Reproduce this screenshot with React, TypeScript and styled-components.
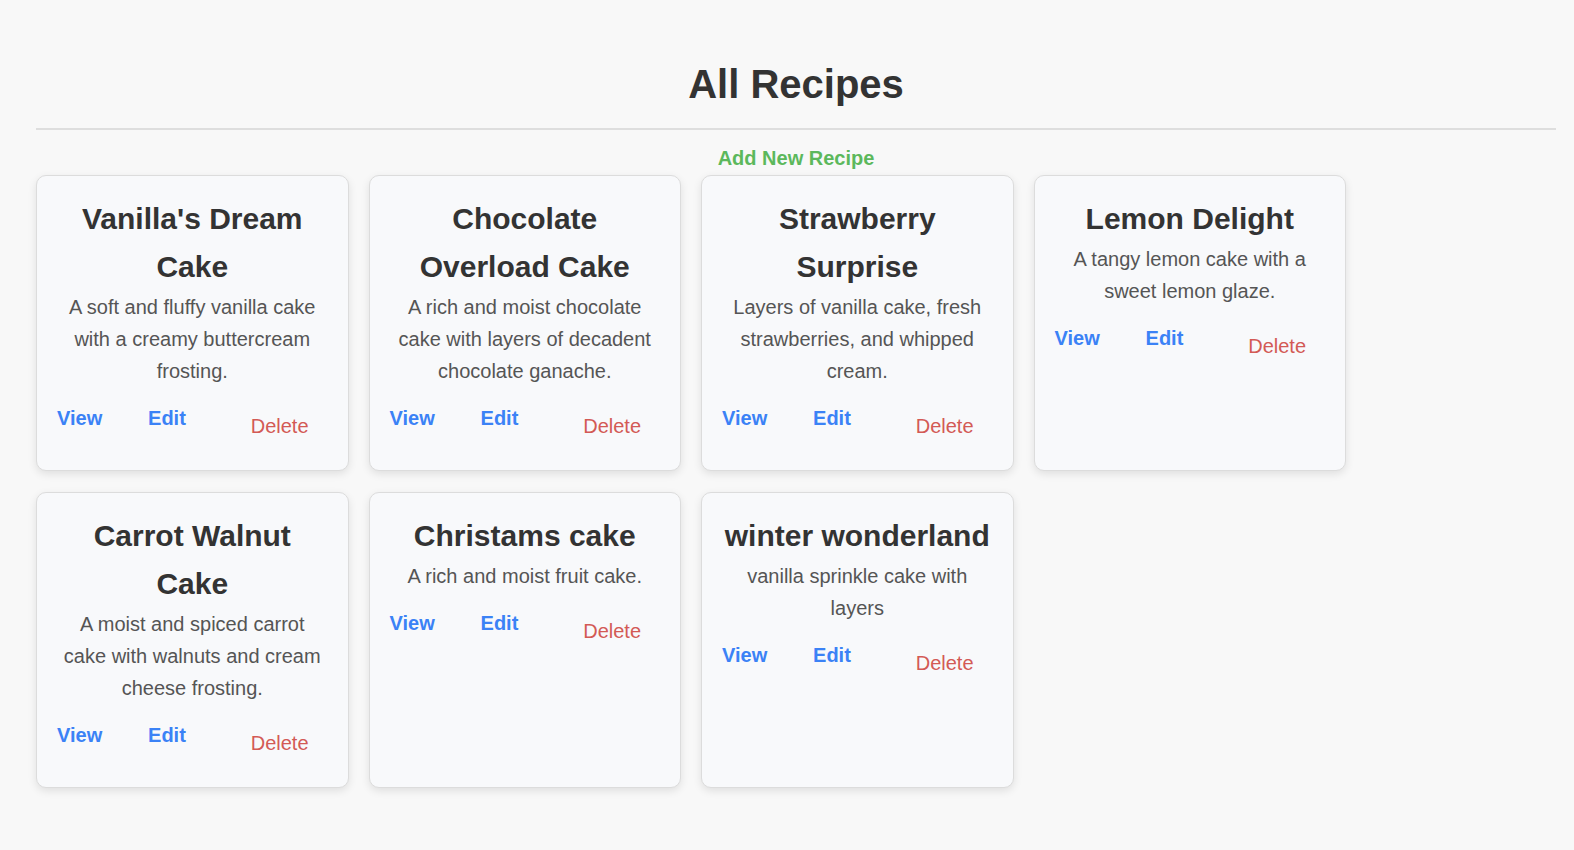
import styled, { createGlobalStyle } from "styled-components";

interface Recipe {
  id: number;
  title: string;
  description: string;
}

const recipes: Recipe[] = [
  { id: 1, title: "Vanilla's Dream Cake", description: "A soft and fluffy vanilla cake with a creamy buttercream frosting." },
  { id: 2, title: "Chocolate Overload Cake", description: "A rich and moist chocolate cake with layers of decadent chocolate ganache." },
  { id: 3, title: "Strawberry Surprise", description: "Layers of vanilla cake, fresh strawberries, and whipped cream." },
  { id: 4, title: "Lemon Delight", description: "A tangy lemon cake with a sweet lemon glaze." },
  { id: 5, title: "Carrot Walnut Cake", description: "A moist and spiced carrot cake with walnuts and cream cheese frosting." },
  { id: 6, title: "Christams cake", description: "A rich and moist fruit cake." },
  { id: 7, title: "winter wonderland", description: "vanilla sprinkle cake with layers" },
];

const GlobalStyle = createGlobalStyle`
  body {
    margin: 0;
    background: #f8f8f8;
    font-family: "Liberation Sans", Arial, sans-serif;
    line-height: 1.6;
    color: #333;
  }
`;

const Page = styled.div`
  padding: 42px 18px 40px 36px;
`;

const Title = styled.h1`
  margin: 0;
  padding-top: 18px;
  font-size: 40px;
  line-height: 48px;
  text-align: center;
  color: #333;
`;

const Divider = styled.hr`
  margin: 20px 0 0;
  border: none;
  border-top: 2px solid #dedede;
`;

const AddLink = styled.a`
  display: block;
  margin-top: 12px;
  margin-bottom: 1px;
  text-align: center;
  font-size: 20px;
  font-weight: bold;
  line-height: 32px;
  color: #5cb85c;
  text-decoration: none;
  cursor: pointer;
`;

const Grid = styled.div`
  display: flex;
  flex-wrap: wrap;
  gap: 21px 20px;
`;

const Card = styled.div`
  width: 312.5px;
  box-sizing: border-box;
  padding: 19px 20px 20px;
  background: #f8f9fb;
  border: 1px solid #dcdcdc;
  border-radius: 10px;
  box-shadow: 0 3px 8px rgba(0, 0, 0, 0.1);
  text-align: center;
`;

const CardTitle = styled.h2`
  margin: 0;
  font-size: 30px;
  line-height: 48px;
  color: #333;
`;

const Description = styled.p`
  margin: 0;
  font-size: 20px;
  line-height: 32px;
  color: #555;
`;

const Actions = styled.div`
  display: flex;
  justify-content: space-between;
  margin-top: 15px;
`;

const ActionLink = styled.a`
  font-size: 20px;
  font-weight: bold;
  line-height: 32px;
  color: #3b82f6;
  text-decoration: none;
  cursor: pointer;
`;

const DeleteButton = styled.button`
  padding: 8px 19px;
  border: none;
  background: none;
  font-family: inherit;
  font-size: 20px;
  line-height: 32px;
  color: #d35a55;
  cursor: pointer;
`;

const App: React.FC = () => {
  return (
    <Page>
      <GlobalStyle />
      <Title>All Recipes</Title>
      <Divider />
      <AddLink>Add New Recipe</AddLink>
      <Grid>
        {recipes.map((recipe) => (
          <Card key={recipe.id}>
            <CardTitle>{recipe.title}</CardTitle>
            <Description>{recipe.description}</Description>
            <Actions>
              <ActionLink>View</ActionLink>
              <ActionLink>Edit</ActionLink>
              <DeleteButton>Delete</DeleteButton>
            </Actions>
          </Card>
        ))}
      </Grid>
    </Page>
  );
};

export default App;
